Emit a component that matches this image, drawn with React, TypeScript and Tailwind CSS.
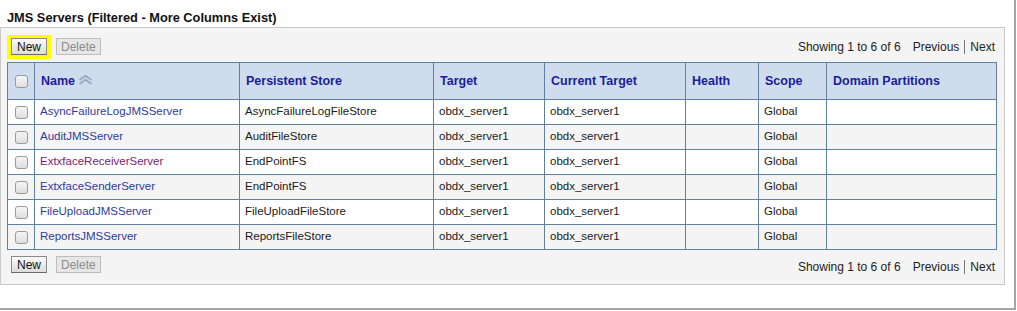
import React from "react";

const rows = [
  { name: "AsyncFailureLogJMSServer", store: "AsyncFailureLogFileStore", visited: false },
  { name: "AuditJMSServer", store: "AuditFileStore", visited: false },
  { name: "ExtxfaceReceiverServer", store: "EndPointFS", visited: true },
  { name: "ExtxfaceSenderServer", store: "EndPointFS", visited: false },
  { name: "FileUploadJMSServer", store: "FileUploadFileStore", visited: false },
  { name: "ReportsJMSServer", store: "ReportsFileStore", visited: false },
];

function Check() {
  return (
    <div className="w-[13px] h-[13px] rounded-[3px] border border-[#9a9a9a] bg-gradient-to-b from-[#f6f6f6] to-[#dedede] mx-auto" />
  );
}

function Btn({ label, disabled }: { label: string; disabled?: boolean }) {
  return disabled ? (
    <div className="h-[17px] px-[4px] flex items-center border border-[#bdbdbd] bg-[#e6e6e6] text-[#8c8c8c] text-[12px] leading-none">
      {label}
    </div>
  ) : (
    <div className="h-[17px] px-[5px] flex items-center border border-[#8a8a8a] border-b-[#6a6a6a] bg-gradient-to-b from-[#fbfbfb] to-[#dcdcdc] text-[#111] text-[12px] leading-none">
      {label}
    </div>
  );
}

function Pager() {
  return (
    <div className="flex items-center text-[12px] text-[#222] leading-none">
      <span>Showing 1 to 6 of 6</span>
      <span className="ml-[12px]">Previous</span>
      <span className="mx-[5px] w-px h-[14px] bg-[#777]" />
      <span>Next</span>
    </div>
  );
}

function SortIcon() {
  return (
    <svg width="15" height="10" viewBox="0 0 15 10" className="inline-block ml-[3px] -mt-[2px]">
      <path d="M1.5 5 L7.5 0.8 L13.5 5" fill="none" stroke="#9aaac2" strokeWidth="2" />
      <path d="M1.5 9 L7.5 4.8 L13.5 9" fill="none" stroke="#9aaac2" strokeWidth="2" />
    </svg>
  );
}

export default function App() {
  const th = "border border-[#60809f] bg-[#cfdcee] text-left font-bold text-[#1c1c9e] text-[12.5px] px-[6px] align-middle";
  const td = "border border-[#60809f] px-[5px] align-middle text-[11.5px] text-[#1a1a1a] whitespace-nowrap";
  return (
    <div
      className="w-[1016px] h-[310px] bg-white border-r-2 border-b-2 border-[#a4a4a4] overflow-hidden"
      style={{ fontFamily: '"Liberation Sans", Arial, sans-serif' }}
    >
      <div className="h-[27px] pl-[7px] pt-[10px] text-[12.8px] font-bold text-[#111] leading-[15px]">
        JMS Servers (Filtered - More Columns Exist)
      </div>
      <div className="w-[1005px] h-[258px] border border-[#c9c9c9] bg-[#f4f4f4]">
        <div className="h-[34px] flex items-start justify-between pl-[6px] pr-[9px]">
          <div className="flex items-start mt-[7px] gap-[5px]">
            <div className="bg-[#ffff00] pl-[4px] pr-[4px] pt-[3px] pb-[4px]">
              <Btn label="New" />
            </div>
            <div className="mt-[3px]">
              <Btn label="Delete" disabled />
            </div>
          </div>
          <div className="mt-[12px]">
            <Pager />
          </div>
        </div>
        <div className="pl-[6px]">
          <table className="table-fixed border-collapse w-[989px]">
            <colgroup>
              <col className="w-[27px]" />
              <col className="w-[205px]" />
              <col className="w-[194px]" />
              <col className="w-[111px]" />
              <col className="w-[141px]" />
              <col className="w-[73px]" />
              <col className="w-[68px]" />
              <col className="w-[170px]" />
            </colgroup>
            <thead>
              <tr className="h-[37px]">
                <th className={th + " px-0"}>
                  <Check />
                </th>
                <th className={th}>
                  Name
                  <SortIcon />
                </th>
                <th className={th}>Persistent Store</th>
                <th className={th}>Target</th>
                <th className={th}>Current Target</th>
                <th className={th}>Health</th>
                <th className={th}>Scope</th>
                <th className={th}>Domain Partitions</th>
              </tr>
            </thead>
            <tbody>
              {rows.map((r, i) => (
                <tr key={r.name} className={"h-[25px] " + (i % 2 === 1 ? "bg-[#f4f4f4]" : "bg-white")}>
                  <td className={td + " px-0"}>
                    <Check />
                  </td>
                  <td className={td}>
                    <span className={r.visited ? "text-[#7d1d6f]" : "text-[#2f3a9e]"}>{r.name}</span>
                  </td>
                  <td className={td}>{r.store}</td>
                  <td className={td}>obdx_server1</td>
                  <td className={td}>obdx_server1</td>
                  <td className={td}></td>
                  <td className={td}>Global</td>
                  <td className={td}></td>
                </tr>
              ))}
            </tbody>
          </table>
        </div>
        <div className="h-[34px] flex items-start justify-between pl-[10px] pr-[9px]">
          <div className="flex items-start mt-[6px] gap-[9px]">
            <Btn label="New" />
            <Btn label="Delete" disabled />
          </div>
          <div className="mt-[10px]">
            <Pager />
          </div>
        </div>
      </div>
    </div>
  );
}
